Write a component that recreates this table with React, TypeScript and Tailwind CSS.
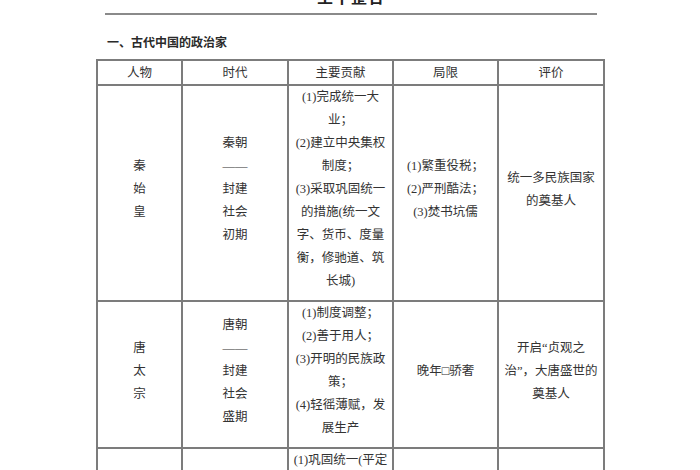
const font = { fontFamily: '"Liberation Serif", "Noto Sans CJK SC", serif' }

type Row = {
  height: string
  person: string[]
  era: string[]
  contribution: string[]
  limits: string[]
  evaluation: string[]
}

const headers = ["人物", "时代", "主要贡献", "局限", "评价"]

const rows: Row[] = [
  {
    height: "h-[215px]",
    person: ["秦", "始", "皇"],
    era: ["秦朝", "——", "封建", "社会", "初期"],
    contribution: [
      "(1)完成统一大",
      "业；",
      "(2)建立中央集权",
      "制度；",
      "(3)采取巩固统一",
      "的措施(统一文",
      "字、货币、度量",
      "衡，修驰道、筑",
      "长城)",
    ],
    limits: ["(1)繁重役税；", "(2)严刑酷法；", "(3)焚书坑儒"],
    evaluation: ["统一多民族国家", "的奠基人"],
  },
  {
    height: "h-[146px]",
    person: ["唐", "太", "宗"],
    era: ["唐朝", "——", "封建", "社会", "盛期"],
    contribution: [
      "(1)制度调整；",
      "(2)善于用人；",
      "(3)开明的民族政",
      "策；",
      "(4)轻徭薄赋，发",
      "展生产",
    ],
    limits: ["晚年□骄奢"],
    evaluation: ["开启“贞观之", "治”，大唐盛世的", "奠基人"],
  },
  {
    height: "h-[200px]",
    person: ["康", "熙", "帝"],
    era: ["清朝", "——", "封建", "社会", "晚期"],
    contribution: [
      "(1)巩固统一(平定",
      "三藩，收复台",
      "湾，抗击沙俄",
      "侵略)；",
      "(2)发展经济；",
      "(3)加强中央集权",
    ],
    limits: ["重农抑商，", "闭关锁国"],
    evaluation: ["奠定了清朝前期", "繁荣的基础"],
  },
]

function Lines({ items }: { items: string[] }) {
  return (
    <div className="flex flex-col items-center">
      {items.map((t, i) => (
        <div key={i} className="leading-[23px] whitespace-nowrap">
          {t}
        </div>
      ))}
    </div>
  )
}

export default function App() {
  const cell = "border-2 border-[#7c7c7c] text-center align-middle p-0"
  const body = cell + " pb-[7px]"
  return (
    <div className="w-[700px] h-[470px] overflow-hidden bg-white text-[#333]" style={font}>
      <div className="-mt-[12px] h-[20px] leading-[20px] text-center text-[16px] font-bold text-[#222] pl-[2px] tracking-[1px]">
        主干整合
      </div>
      <div className="mt-[5px] ml-[105px] w-[492px] h-[2px] bg-[#8a8a8a]" />
      <div className="mt-[20px] ml-[107px] h-[16px] leading-[16px] text-[12px] font-bold text-[#2a2a2a]">
        一、古代中国的政治家
      </div>
      <table className="mt-[8px] ml-[96px] w-[509px] table-fixed border-collapse text-[12.5px]">
        <colgroup>
          <col className="w-[85px]" />
          <col className="w-[106px]" />
          <col className="w-[105px]" />
          <col className="w-[105px]" />
          <col className="w-[106px]" />
        </colgroup>
        <thead>
          <tr className="h-[25px]">
            {headers.map((h) => (
              <th key={h} className={cell + " font-normal leading-[20px]"}>
                {h}
              </th>
            ))}
          </tr>
        </thead>
        <tbody>
          {rows.map((r, i) => (
            <tr key={i} className={r.height}>
              <td className={body}>
                <Lines items={r.person} />
              </td>
              <td className={body}>
                <Lines items={r.era} />
              </td>
              <td className={i === 2 ? cell + " align-top" : body}>
                <Lines items={r.contribution} />
              </td>
              <td className={body}>
                <Lines items={r.limits} />
              </td>
              <td className={body}>
                <Lines items={r.evaluation} />
              </td>
            </tr>
          ))}
        </tbody>
      </table>
    </div>
  )
}
